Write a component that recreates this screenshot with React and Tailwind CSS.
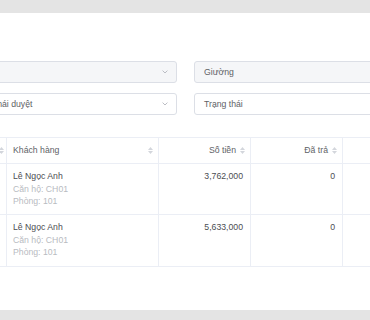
import React from 'react'

const font = { fontFamily: '"Liberation Sans", Arial, sans-serif' }

function Chevron() {
  return (
    <svg width="6" height="4" viewBox="0 0 6 4" className="shrink-0">
      <path d="M0.6 0.6L3 3L5.4 0.6" fill="none" stroke="#b4b7bd" strokeWidth="0.9" />
    </svg>
  )
}

function SortIcon() {
  return (
    <span className="inline-flex flex-col gap-[1px] ml-[4px] shrink-0">
      <svg width="5" height="3" viewBox="0 0 5 3">
        <path d="M2.5 0L5 3H0z" fill="#d3d6dc" />
      </svg>
      <svg width="5" height="3" viewBox="0 0 5 3">
        <path d="M0 0H5L2.5 3z" fill="#d3d6dc" />
      </svg>
    </span>
  )
}

function Select({ label, disabled, chevron }) {
  return (
    <div
      className={`flex-1 h-[22px] flex items-center justify-between pl-[9px] pr-[8px] rounded-[3px] border border-[#dcdfe6] ${
        disabled ? 'bg-[#f5f6f8]' : 'bg-white'
      }`}
    >
      <span className="text-[#606266] whitespace-nowrap">{label}</span>
      {chevron && <Chevron />}
    </div>
  )
}

const rows = [
  { name: 'Lê Ngọc Anh', can: 'Căn hộ: CH01', phong: 'Phòng: 101', amount: '3,762,000', paid: '0' },
  { name: 'Lê Ngọc Anh', can: 'Căn hộ: CH01', phong: 'Phòng: 101', amount: '5,633,000', paid: '0' },
]

export default function App() {
  return (
    <div
      className="w-[370px] h-[320px] overflow-hidden bg-[#e4e4e4] flex flex-col text-[8.7px] leading-[12.5px]"
      style={font}
    >
      <div className="h-[13px] shrink-0" />
      <div className="h-[297px] shrink-0 bg-white overflow-hidden pt-[48px]">
        {/* Bộ lọc */}
        <div className="flex flex-col gap-[10px] ml-[-40px] w-[451px]">
          <div className="flex gap-[17px]">
            <Select label="" disabled chevron />
            <Select label="Giường" disabled />
          </div>
          <div className="flex gap-[17px]">
            <Select label="Trạng thái duyệt" chevron />
            <Select label="Trạng thái" />
          </div>
        </div>

        {/* Bảng */}
        <div className="mt-[22px] ml-[-40px] w-[470px] border-t border-b border-[#ebeef5]">
          <div className="flex h-[26px] border-b border-[#ebeef5] text-[#606266]">
            <div className="w-[47px] border-r border-[#ebeef5] flex items-center justify-end pr-[2px]">
              <SortIcon />
            </div>
            <div className="w-[152px] border-r border-[#ebeef5] flex items-center justify-between pl-[6px] pr-[5px]">
              <span>Khách hàng</span>
              <SortIcon />
            </div>
            <div className="w-[92px] border-r border-[#ebeef5] flex items-center justify-end pr-[5px]">
              <span>Số tiền</span>
              <SortIcon />
            </div>
            <div className="w-[92px] border-r border-[#ebeef5] flex items-center justify-end pr-[5px]">
              <span>Đã trả</span>
              <SortIcon />
            </div>
            <div className="flex-1" />
          </div>
          {rows.map((r, i) => (
            <div
              key={i}
              className={`flex h-[51px] ${i < rows.length - 1 ? 'border-b border-[#ebeef5]' : ''}`}
            >
              <div className="w-[47px] border-r border-[#ebeef5]" />
              <div className="w-[152px] border-r border-[#ebeef5] pl-[6px] pt-[6px]">
                <div className="text-[#4a4d52]">{r.name}</div>
                <div className="text-[#b8bbc1]">{r.can}</div>
                <div className="text-[#b8bbc1]">{r.phong}</div>
              </div>
              <div className="w-[92px] border-r border-[#ebeef5] text-right pr-[7px] pt-[6px] text-[#4a4d52]">
                {r.amount}
              </div>
              <div className="w-[92px] border-r border-[#ebeef5] text-right pr-[7px] pt-[6px] text-[#4a4d52]">
                {r.paid}
              </div>
              <div className="flex-1" />
            </div>
          ))}
        </div>
      </div>
    </div>
  )
}
